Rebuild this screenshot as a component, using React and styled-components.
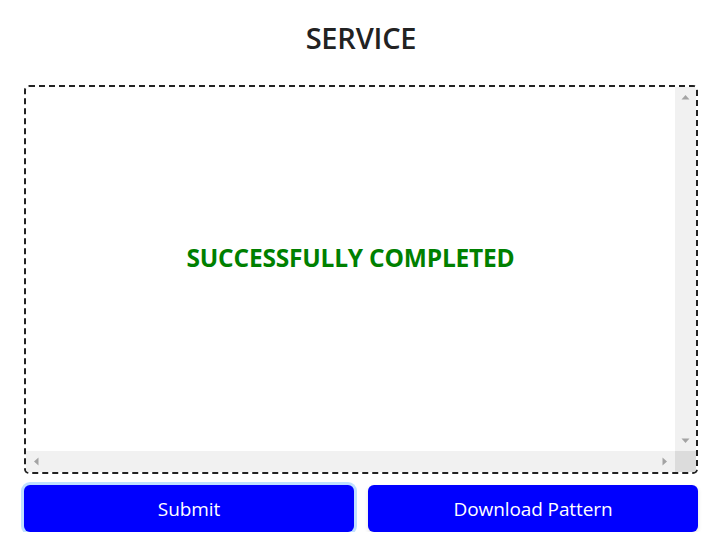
import React from "react";
import styled, { createGlobalStyle } from "styled-components";

const Global = createGlobalStyle`
  html, body { margin: 0; padding: 0; background: #fff; }
  body { font-family: "Open Sans", "Noto Sans", sans-serif; }
  * { box-sizing: border-box; }
`;

const Page = styled.main`
  width: 721px;
  padding: 18px 23px 0 24px;
  display: flex;
  flex-direction: column;
  align-items: stretch;
`;

const Title = styled.h1`
  margin: 0 0 27px;
  text-align: center;
  font-size: 29px;
  font-weight: 600;
  color: #222;
  line-height: 40px;
  letter-spacing: -0.2px;
`;

const Viewer = styled.section`
  height: 389px;
  border: 2px dashed #222;
  border-radius: 5px;
  overflow: hidden;
  background: #fff;
  display: grid;
  grid-template-columns: 1fr 21px;
  grid-template-rows: 1fr 21px;
`;

const Content = styled.div`
  display: flex;
  align-items: flex-start;
  justify-content: center;
  overflow: hidden;
`;

const Message = styled.div`
  height: 340px;
  display: flex;
  align-items: center;
  justify-content: center;
  color: #008000;
  font-weight: 700;
  font-size: 24.5px;
  letter-spacing: -0.2px;
`;

const Track = styled.div`
  background: #f1f1f1;
  display: flex;
  flex-direction: ${(p) => (p.$vertical ? "column" : "row")};
  justify-content: space-between;
  align-items: stretch;
`;

const Arrow = styled.span`
  width: 21px;
  height: 21px;
  display: flex;
  align-items: center;
  justify-content: center;
`;

const Corner = styled.div`
  background: #dcdcdc;
`;

const Actions = styled.div`
  display: grid;
  grid-template-columns: 1fr 1fr;
  gap: 14px;
  margin-top: 11px;
`;

const Button = styled.button`
  height: 47px;
  border: none;
  border-radius: 6px;
  background: #0000ff;
  color: #fff;
  font-family: "Open Sans", "Noto Sans", sans-serif;
  font-size: 19px;
  letter-spacing: -0.1px;
  box-shadow: ${(p) => (p.$focused ? "0 0 0 3px #bfdfff" : "0 2px 4px rgba(0,0,0,0.12)")};
  cursor: pointer;
`;

const rot = { up: 0, right: 90, down: 180, left: 270 };

function Tri({ dir }) {
  return (
    <Arrow>
      <svg width="9" height="9" viewBox="0 0 9 9" style={{ transform: `rotate(${rot[dir]}deg)` }}>
        <polygon points="0.5,6.5 8.5,6.5 4.5,2" fill="#a3a3a3" />
      </svg>
    </Arrow>
  );
}

export default function App() {
  return (
    <>
      <Global />
      <Page>
        <Title>SERVICE</Title>
        <Viewer>
          <Content>
            <Message>SUCCESSFULLY COMPLETED</Message>
          </Content>
          <Track $vertical>
            <Tri dir="up" />
            <Tri dir="down" />
          </Track>
          <Track>
            <Tri dir="left" />
            <Tri dir="right" />
          </Track>
          <Corner />
        </Viewer>
        <Actions>
          <Button $focused>Submit</Button>
          <Button>Download Pattern</Button>
        </Actions>
      </Page>
    </>
  );
}
